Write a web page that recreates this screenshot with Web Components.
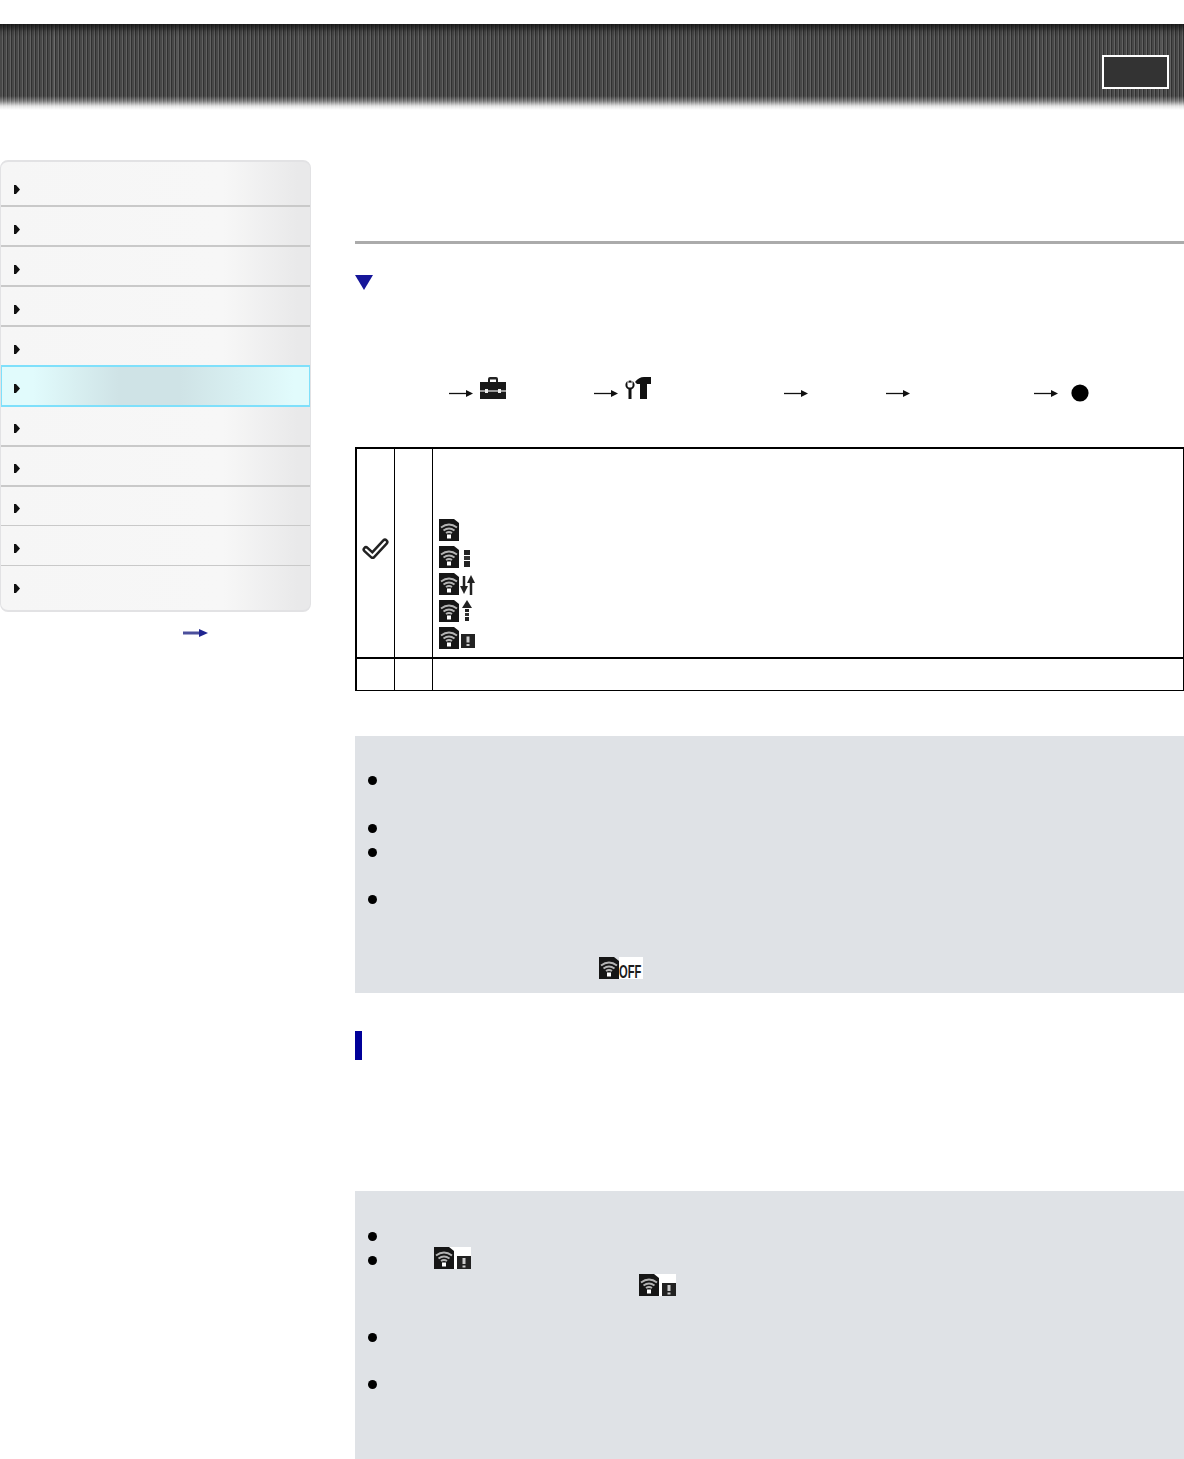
<!DOCTYPE html>
<html><head><meta charset="utf-8"><style>
html,body{margin:0;padding:0;background:#fff;font-family:"Liberation Sans",Arial,sans-serif}
body{height:1459px;overflow:hidden}
</style></head><body>
<page-header></page-header>
<page-layout>
  <side-nav slot="side">
    <nav-item first></nav-item><nav-item upper></nav-item><nav-item upper></nav-item><nav-item upper></nav-item><nav-item pre></nav-item>
    <nav-item active></nav-item>
    <nav-item></nav-item><nav-item></nav-item><nav-item thin></nav-item><nav-item thin></nav-item><nav-item last></nav-item>
  </side-nav>
  <main-content slot="main"></main-content>
</page-layout>
<script>
const ICONS={
 wifi:`<svg width="20" height="22" viewBox="0 0 20 22" style="filter:blur(.3px)"><path d="M0 0H15L20 4V22H0Z" fill="#161616"/><g fill="none" stroke="#b4b4b4" stroke-width="1.9"><path d="M2 8.500Q10 2.500 18 8.500"/><path d="M4.500 11.500Q10 7.500 15.500 11.500"/><path d="M7 14Q10 12 13 14"/></g><rect x="8" y="15.500" width="4" height="4" fill="#fff"/></svg>`,
 arrow:`<svg width="24" height="8" viewBox="0 0 24 8" style="filter:blur(.25px)"><path d="M0 4.500H18" stroke="#111" stroke-width="1.300"/><path d="M17 1L24 4.500L17 8Z" fill="#111"/></svg>`
};
function wifiExt(kind){
 const ext={
  none:'',
  bars:`<svg width="6" height="17" viewBox="0 0 6 17" style="margin:4px 0 0 5px;filter:blur(.3px)"><rect width="6" height="5" fill="#222"/><rect y="6" width="6" height="4" fill="#333"/><rect y="11" width="6" height="6" fill="#222"/></svg>`,
  updown:`<svg width="15" height="22" viewBox="0 0 15 22" style="margin:1px 0 0 1px;filter:blur(.3px)"><path d="M4 2V15" stroke="#222" stroke-width="2.500"/><path d="M0 12H8L4 20Z" fill="#222"/><path d="M11 7V21" stroke="#222" stroke-width="2.500"/><path d="M7 9L11 1L15 9Z" fill="#222"/></svg>`,
  up:`<svg width="10" height="21" viewBox="0 0 10 21" style="margin:0 0 0 3px;filter:blur(.3px)"><path d="M5 0L10 8H0Z" fill="#222"/><rect x="3" y="9" width="4" height="3" fill="#222"/><rect x="3" y="13" width="4" height="3" fill="#333"/><rect x="3" y="17" width="4" height="4" fill="#222"/></svg>`,
  warn:`<svg width="14" height="14" viewBox="0 0 14 14" style="margin:7px 0 0 2px;filter:blur(.3px)"><rect width="14" height="14" fill="#222"/><rect x="5.500" y="2.500" width="3" height="6" fill="#ccc"/><rect x="5.500" y="10" width="3" height="2" fill="#ccc"/></svg>`,
  warnw:`<svg width="14" height="13" viewBox="0 0 14 13" style="margin:9px 0 0 3px;filter:blur(.3px)"><rect width="14" height="13" fill="#222"/><rect x="5.500" y="2" width="3" height="6" fill="#ccc"/><rect x="5.500" y="9.500" width="3" height="2" fill="#ccc"/></svg>`
 };
 return ext[kind];
}
function def(name,html){
 customElements.define(name,class extends HTMLElement{
  constructor(){super();const r=this.attachShadow({mode:'open'});r.innerHTML=typeof html==='function'?html(this):html;}
 });
}
def('page-header',`<style>
:host{display:block;padding-top:24px}
.band{height:86px;display:flex;justify-content:flex-end;align-items:flex-start;padding:31px 15px 0 0;box-sizing:border-box;
 background:
  linear-gradient(to bottom,rgba(15,15,15,.8) 0,rgba(20,20,20,.15) 8px,rgba(0,0,0,0) 13px,rgba(0,0,0,0) 72px,rgba(255,255,255,.3) 77px,rgba(255,255,255,.85) 82px,#fff 86px),
  repeating-linear-gradient(to right,rgba(255,255,255,0) 0,rgba(255,255,255,0) 53px,rgba(255,255,255,.07) 53px,rgba(255,255,255,.07) 55px,rgba(255,255,255,0) 55px,rgba(255,255,255,0) 123px),
  repeating-linear-gradient(to right,#484848 0,#484848 2px,#626262 2px,#626262 3px,#303030 3px,#303030 4px);}
.box{width:67px;height:34px;box-sizing:border-box;border:2px solid #fff;background:#333}
</style><div class="band"><div class="box"></div></div>`);
def('page-layout',`<style>
:host{display:flex;align-items:flex-start;padding-top:50px}
.s{width:311px;flex:none}.m{flex:1;min-width:0;margin-left:44px}
</style><div class="s"><slot name="side"></slot></div><div class="m"><slot name="main"></slot></div>`);
def('side-nav',`<style>
:host{display:block}
.box{border:1px solid #e2e2e4;border-width:2px 1px 2px 1px;border-radius:8px;overflow:hidden;
 background:linear-gradient(to right,#f6f6f6 0,#f7f7f7 72%,#e9e9ea 96%,#e9e9ea 100%)}
.more{display:flex;justify-content:flex-end;padding:16px 103px 0 0}
.more svg{display:block;filter:blur(.4px)}
</style><div class="box"><slot></slot></div>
<div class="more"><svg width="25" height="10" viewBox="0 0 25 10"><path d="M0 3.500H17V6.500H0Z" fill="#4b4f9c"/><path d="M16 1L25 5L16 9Z" fill="#1f2590"/></svg></div>`);
def('nav-item',`<style>
:host{display:flex;align-items:flex-end;height:40px;padding:0 0 12px 13px;box-sizing:border-box;border-bottom:2px solid #c9c9c9}
:host([first]){height:45px;padding-bottom:11px}
:host([upper]){padding-bottom:11px}
:host([pre]){height:38px;border-bottom:0;padding-bottom:11px}
:host([thin]){border-bottom-width:1px}
:host([thin]:nth-of-type(9)){height:39px}
:host([last]){border-bottom:0;height:44px;padding-bottom:17px}
:host([active]){height:42px;border:2px solid #7fe0fb;padding:0 0 12px 12px;margin:0 -1px;
 background:linear-gradient(to right,#e1fbfc 0,#e1fbfc 10%,#cfe3e6 38%,#cfe3e6 58%,#e1fbfc 95%)}
svg{display:block;filter:blur(.25px)}
</style><svg width="6" height="9" viewBox="0 0 6 9"><path d="M0 0H2L6 4.500L2 9H0Z" fill="#111"/></svg>`);
def('wifi-icon',(el)=>`<style>:host{display:flex;height:22px;width:fit-content;align-items:flex-start}svg{display:block;flex:none}
.w{display:flex;height:22px;align-items:flex-start}.bg{background:#fff}</style>
<div class="w ${el.hasAttribute('white')?'bg':''}">${ICONS.wifi}${wifiExt(el.getAttribute('kind')||'none')||''}<slot></slot></div>`);
def('flow-arrow',`<style>:host{display:block;line-height:0}</style>${ICONS.arrow}`);
def('menu-path',`<style>
:host{display:block;height:28px}
.row{display:flex;align-items:center;height:28px;padding-left:94px}
svg,flow-arrow{display:block;flex:none}
.ic{align-self:flex-start;margin-top:-2px;filter:blur(.3px)}
</style><div class="row">
<flow-arrow></flow-arrow>
<svg class="ic" style="margin-left:7px" width="26" height="22" viewBox="0 0 26 22"><path d="M8 5V2Q8 0 10 0H16Q18 0 18 2V5H16V2.500H10V5Z" fill="#222"/><rect y="5" width="26" height="17" fill="#1a1a1a"/><rect y="13" width="26" height="2" fill="#999"/><rect x="5" y="12" width="3" height="4" fill="#eee"/><rect x="18" y="12" width="3" height="4" fill="#eee"/></svg>
<flow-arrow style="margin-left:88px"></flow-arrow>
<svg class="ic" style="margin-left:7px" width="27" height="22" viewBox="0 0 27 22"><circle cx="5" cy="8" r="3.600" fill="none" stroke="#111" stroke-width="2"/><path d="M3 2.500V7M7 2.500V7" stroke="#fff" stroke-width="1"/><rect x="3.500" y="12" width="3" height="10" fill="#111"/><path d="M10 5Q14 0 19 0H26V7H22V22H15V7H12Z" fill="#111"/></svg>
<flow-arrow style="margin-left:132px"></flow-arrow>
<flow-arrow style="margin-left:78px"></flow-arrow>
<flow-arrow style="margin-left:124px"></flow-arrow>
<svg style="margin-left:13px" width="18" height="18" viewBox="0 0 18 18"><circle cx="9" cy="9" r="8.600" fill="#000"/></svg>
</div>`);
def('setting-table',`<style>
:host{display:block}
table{border-collapse:separate;border-spacing:0;width:100%;table-layout:fixed;box-sizing:border-box;border:solid #000;border-width:2px 1px 1px 2px}
td{border-right:1px solid #000;padding:0;vertical-align:top;box-sizing:border-box}
td:last-child{border-right:0}
tr.a td{height:210px;border-bottom:2px solid #000}
tr.b td{height:31px}
.c1{width:38px}.c2{width:38px}
.chk{padding-top:88px}
.chk svg{display:block;margin:0 auto;filter:blur(.4px)}
.icons{display:flex;flex-direction:column;gap:5px;padding:70px 0 0 6px}
</style><table><colgroup><col class="c1"><col class="c2"><col></colgroup>
<tr class="a"><td class="chk"><svg width="27" height="23" viewBox="0 0 27 23"><path d="M4 12.500L10.500 18.500L23 5" fill="none" stroke="#222" stroke-width="7" stroke-linecap="round" stroke-linejoin="round"/><path d="M4 12.500L10.500 18.500L23 5" fill="none" stroke="#fff" stroke-width="2" stroke-linecap="round" stroke-linejoin="round"/></svg></td><td></td><td><div class="icons">
<wifi-icon></wifi-icon><wifi-icon kind="bars"></wifi-icon><wifi-icon kind="updown"></wifi-icon><wifi-icon kind="up"></wifi-icon><wifi-icon kind="warn"></wifi-icon>
</div></td></tr>
<tr class="b"><td></td><td></td><td></td></tr></table>`);
def('note-box',`<style>
:host{display:block;background:#dfe2e6;box-sizing:border-box}
</style><slot></slot>`);
def('note-bullet',`<style>
:host{display:flex;padding-left:13px}
.d{width:9px;height:9px;border-radius:50%;background:#000;flex:none}
.b{flex:1;min-width:0}
</style><div class="d"></div><div class="b"><slot></slot></div>`);
def('main-content',`<style>
:host{display:block}
.rule{height:3px;background:#ababab;margin-top:81px}
.tri{display:block;margin-top:31px;filter:blur(.5px)}
menu-path{margin-top:89px}
setting-table{margin-top:40px}
.n1{margin-top:45px;height:257px;padding-top:40px}
.n1 note-bullet:nth-child(1){height:48px}
.n1 note-bullet:nth-child(2){height:24px}
.n1 note-bullet:nth-child(3){height:47px}
.bar{width:7px;height:29px;background:#000099;margin-top:38px}
.n2{margin-top:131px;height:268px;padding-top:41px}
.n2 note-bullet:nth-child(1){height:24px}
.n2 note-bullet:nth-child(2){height:77px}
.n2 note-bullet:nth-child(3){height:47px}
.i1{margin:-9px 0 0 57px}
.i2{margin:5px 0 0 262px}
.offw{display:flex;margin:62px 0 0 222px}
.off{display:block;background:#fff;width:24px;height:22px;overflow:visible;color:#1c1c1c}
.off span{display:inline-block;font:bold 18px/18px "Liberation Sans",sans-serif;transform-origin:0 0;transform:translateY(6px) scale(.62,1);white-space:nowrap}
</style>
<div class="rule"></div>
<svg class="tri" width="18" height="15" viewBox="0 0 18 15"><path d="M0 0H18L9 15Z" fill="#16169a"/></svg>
<menu-path></menu-path>
<setting-table></setting-table>
<note-box class="n1">
 <note-bullet></note-bullet><note-bullet></note-bullet><note-bullet></note-bullet>
 <note-bullet><div class="offw"><wifi-icon></wifi-icon><div class="off"><span>OFF</span></div></div></note-bullet>
</note-box>
<div class="bar"></div>
<note-box class="n2">
 <note-bullet></note-bullet>
 <note-bullet><wifi-icon class="i1" kind="warnw" white></wifi-icon><wifi-icon class="i2" kind="warnw" white></wifi-icon></note-bullet>
 <note-bullet></note-bullet><note-bullet></note-bullet>
</note-box>`);
</script></body></html>
